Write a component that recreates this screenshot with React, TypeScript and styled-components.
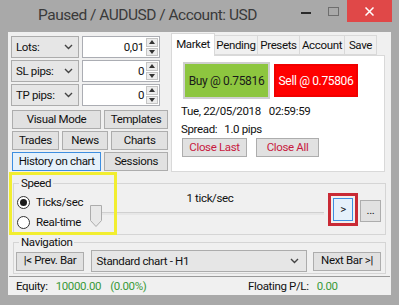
import React from 'react';
import styled, { createGlobalStyle } from 'styled-components';

const GlobalStyle = createGlobalStyle`
  html, body {
    margin: 0;
    padding: 0;
    background: #a9a9a9;
  }
  body {
    font-family: Roboto, "Liberation Sans", Arial, sans-serif;
    font-size: 11.5px;
    letter-spacing: -0.35px;
    color: #111;
  }
  * {
    box-sizing: border-box;
  }
`;

const Window = styled.div`
  width: 399px;
  height: 305px;
  background: #a9a9a9;
  display: flex;
  flex-direction: column;
  overflow: hidden;
`;

const TitleBar = styled.div`
  height: 32px;
  flex-shrink: 0;
  display: flex;
  align-items: flex-start;
`;

const Title = styled.div`
  flex: 1;
  padding: 5px 0 0 38px;
  font-size: 15.5px;
  letter-spacing: -0.5px;
  line-height: 20px;
  color: #3a3a3a;
  white-space: nowrap;
`;

const Controls = styled.div`
  display: flex;
  height: 22px;
  margin-right: 7px;
`;

const CtrlButton = styled.div<{ $close?: boolean; $w: number }>`
  width: ${p => p.$w}px;
  height: 22px;
  display: flex;
  align-items: center;
  justify-content: center;
  background: ${p => (p.$close ? '#e04848' : 'transparent')};
`;

const Client = styled.div`
  flex: 1;
  margin: 0 8px 10px 8px;
  background: #f0f0f0;
  display: flex;
  flex-direction: column;
`;

const TopSection = styled.div`
  display: flex;
  gap: 3px;
  padding: 1px 0 0 3px;
`;

const LeftColumn = styled.div`
  width: 157px;
  margin-top: 3px;
  display: flex;
  flex-direction: column;
`;

const ParamRow = styled.div`
  display: flex;
  gap: 3px;
  height: 22px;
  margin-bottom: 2px;
`;

const Combo = styled.div<{ $w: number }>`
  width: ${p => p.$w}px;
  height: 100%;
  background: #e6e6e6;
  border: 1px solid #acacac;
  display: flex;
  align-items: center;
  justify-content: space-between;
  padding: 0 5px 0 4px;
`;

const NumberBox = styled.div`
  width: 78px;
  height: 100%;
  background: #fff;
  border: 1px solid #abadb3;
  display: flex;
  align-items: center;
`;

const NumberValue = styled.span`
  flex: 1;
  text-align: right;
  padding-right: 2px;
`;

const Spinner = styled.div`
  width: 12px;
  height: 18px;
  margin-right: 1px;
  display: flex;
  flex-direction: column;
  gap: 1px;
`;

const SpinHalf = styled.div`
  flex: 1;
  background: #ececec;
  border: 1px solid #c4c4c4;
  display: flex;
  align-items: center;
  justify-content: center;
`;

const ButtonRow = styled.div`
  display: flex;
  gap: 3px;
  padding-left: 1px;
  margin-top: 2px;
  &:first-of-type {
    margin-top: 3px;
  }
`;

const Button = styled.div<{ $w: number; $h?: number; $active?: boolean; $color?: string }>`
  width: ${p => p.$w}px;
  height: ${p => p.$h ?? 19}px;
  background: ${p => (p.$active ? '#e5f1fb' : '#e1e1e1')};
  border: 1px solid ${p => (p.$active ? '#3d8ee0' : '#adadad')};
  color: ${p => p.$color ?? '#111'};
  display: flex;
  align-items: center;
  justify-content: center;
  white-space: nowrap;
  line-height: 1;
`;

const TabControl = styled.div`
  width: 214px;
  display: flex;
  flex-direction: column;
`;

const TabStrip = styled.div`
  height: 22px;
  display: flex;
  align-items: flex-end;
`;

const Tab = styled.div<{ $w: number; $active?: boolean }>`
  width: ${p => p.$w}px;
  height: ${p => (p.$active ? 23 : 20)}px;
  margin-left: ${p => (p.$active ? 0 : -1)}px;
  margin-bottom: ${p => (p.$active ? -1 : 0)}px;
  background: ${p => (p.$active ? '#fff' : '#f0f0f0')};
  border: 1px solid #d9d9d9;
  border-bottom: ${p => (p.$active ? 'none' : '1px solid #d9d9d9')};
  display: flex;
  align-items: ${p => (p.$active ? 'flex-start' : 'center')};
  padding-top: ${p => (p.$active ? 3 : 0)}px;
  justify-content: center;
  white-space: nowrap;
  position: relative;
  z-index: ${p => (p.$active ? 1 : 0)};
`;

const TabPanel = styled.div`
  height: 117px;
  background: #fff;
  border: 1px solid #d9d9d9;
  padding: 6px 0 0 9px;
`;

const TradeRow = styled.div`
  display: flex;
  align-items: center;
  gap: 4px;
  margin-left: 2px;
`;

const TradeButton = styled.div<{ $bg: string; $fg: string; $w: number; $h: number; $frame: string }>`
  width: ${p => p.$w}px;
  height: ${p => p.$h}px;
  background: ${p => p.$bg};
  color: ${p => p.$fg};
  border: 2px solid ${p => p.$frame};
  display: flex;
  align-items: center;
  justify-content: center;
  font-size: 12px;
`;

const InfoLine = styled.div`
  height: 18px;
  line-height: 18px;
  white-space: nowrap;
  display: flex;
`;

const InfoGap = styled.span<{ $w: number }>`
  display: inline-block;
  width: ${p => p.$w}px;
`;

const CloseRow = styled.div`
  display: flex;
  gap: 9px;
  margin-left: 1px;
`;

const Group = styled.fieldset`
  margin: 0 5px;
  padding: 0;
  border: 1px solid #d5d5d5;
  min-width: 0;
`;

const Legend = styled.legend`
  margin-left: 5px;
  padding: 0 2px;
  height: 15px;
  line-height: 15px;
`;

const SpeedWrap = styled.div`
  position: relative;
  margin-top: 4px;
`;

const Highlight = styled.div`
  position: absolute;
  left: 1px;
  top: -4px;
  width: 108px;
  height: 63px;
  border: 3px solid #f2ee30;
  pointer-events: none;
`;

const SpeedBody = styled.div`
  display: flex;
  align-items: flex-start;
  padding: 0 4px 5px 3px;
`;

const RadioColumn = styled.div`
  width: 69px;
  padding-top: 4px;
  display: flex;
  flex-direction: column;
  gap: 6px;
`;

const RadioItem = styled.div`
  height: 14px;
  display: flex;
  align-items: center;
  gap: 6px;
  white-space: nowrap;
`;

const RadioCircle = styled.span<{ $checked?: boolean }>`
  width: 13px;
  height: 13px;
  border-radius: 50%;
  border: 1px solid #333;
  background: #fff;
  display: flex;
  align-items: center;
  justify-content: center;
  &::after {
    content: '';
    width: 7px;
    height: 7px;
    border-radius: 50%;
    background: ${p => (p.$checked ? '#1a1a1a' : 'transparent')};
  }
`;

const SliderArea = styled.div`
  flex: 1;
  display: flex;
  flex-direction: column;
`;

const SliderLabel = styled.div`
  height: 14px;
  line-height: 14px;
  text-align: center;
  padding-left: 8px;
`;

const Track = styled.div`
  position: relative;
  height: 22px;
`;

const Groove = styled.div`
  margin: 7px 2px 0 10px;
  height: 3px;
  background: #e7e7e7;
  border-top: 1px solid #d0d0d0;
`;

const Thumb = styled.svg`
  position: absolute;
  left: 4px;
  top: 0;
`;

const RedFrame = styled.div`
  margin: 2px 0 0 2px;
  border: 3px solid #c92a35;
  padding: 2px 2px;
`;

const NavBody = styled.div`
  display: flex;
  align-items: center;
  justify-content: space-between;
  height: 22px;
  margin: 0 4px 1px 2px;
`;

const NavCombo = styled(Combo)`
  height: 22px;
  padding-left: 5px;
  padding-right: 7px;
`;

const StatusBar = styled.div`
  margin: 2px 1px 0;
  flex: 1;
  border-top: 1px solid #9a9a9a;
  display: flex;
  align-items: center;
  padding-left: 7px;
`;

const StatusPanel = styled.div<{ $w?: number }>`
  display: flex;
  align-items: center;
  width: ${p => (p.$w ? `${p.$w}px` : 'auto')};
`;

const StatusText = styled.span<{ $green?: boolean; $ml?: number }>`
  color: ${p => (p.$green ? '#3a9a3a' : '#111')};
  margin-left: ${p => p.$ml ?? 0}px;
  white-space: nowrap;
`;

const Chevron = () => (
  <svg width="9" height="6" viewBox="0 0 9 6">
    <path d="M1 1 L4.5 4.5 L8 1" fill="none" stroke="#444" strokeWidth="1.4" />
  </svg>
);

const Arrow = ({ up }: { up?: boolean }) => (
  <svg width="6" height="4" viewBox="0 0 6 4">
    <path d={up ? 'M0 4 L3 0 L6 4 Z' : 'M0 0 L3 4 L6 0 Z'} fill="#333" />
  </svg>
);

const params = [
  { label: 'Lots:', value: '0,01' },
  { label: 'SL pips:', value: '0' },
  { label: 'TP pips:', value: '0' },
];

const App: React.FC = () => {
  return (
    <>
      <GlobalStyle />
      <Window>
        <TitleBar>
          <Title>Paused / AUDUSD / Account: USD</Title>
          <Controls>
            <CtrlButton $w={28}>
              <svg width="10" height="2" viewBox="0 0 10 2" style={{ marginTop: 4 }}>
                <rect width="10" height="2" fill="#2a2a2a" />
              </svg>
            </CtrlButton>
            <CtrlButton $w={27}>
              <svg width="11" height="9" viewBox="0 0 11 9">
                <rect x="0.5" y="0.5" width="10" height="8" fill="none" stroke="#6e6e6e" />
              </svg>
            </CtrlButton>
            <CtrlButton $w={45} $close>
              <svg width="9" height="9" viewBox="0 0 9 9">
                <path d="M0.5 0.5 L8.5 8.5 M8.5 0.5 L0.5 8.5" stroke="#fff" strokeWidth="1.5" />
              </svg>
            </CtrlButton>
          </Controls>
        </TitleBar>

        <Client>
          <TopSection>
            <LeftColumn>
              {params.map(p => (
                <ParamRow key={p.label}>
                  <Combo $w={68}>
                    <span>{p.label}</span>
                    <Chevron />
                  </Combo>
                  <NumberBox>
                    <NumberValue>{p.value}</NumberValue>
                    <Spinner>
                      <SpinHalf><Arrow up /></SpinHalf>
                      <SpinHalf><Arrow /></SpinHalf>
                    </Spinner>
                  </NumberBox>
                </ParamRow>
              ))}
              <ButtonRow>
                <Button $w={89}>Visual Mode</Button>
                <Button $w={64}>Templates</Button>
              </ButtonRow>
              <ButtonRow>
                <Button $w={47}>Trades</Button>
                <Button $w={47}>News</Button>
                <Button $w={57}>Charts</Button>
              </ButtonRow>
              <ButtonRow>
                <Button $w={90} $active>History on chart</Button>
                <Button $w={64}>Sessions</Button>
              </ButtonRow>
            </LeftColumn>

            <TabControl>
              <TabStrip>
                <Tab $w={44} $active>Market</Tab>
                <Tab $w={44}>Pending</Tab>
                <Tab $w={43}>Presets</Tab>
                <Tab $w={46}>Account</Tab>
                <Tab $w={33}>Save</Tab>
              </TabStrip>
              <TabPanel>
                <TradeRow>
                  <TradeButton $w={87} $h={37} $bg="#8dc63f" $fg="#1a1a1a" $frame="#cfcfcf">
                    Buy @ 0.75816
                  </TradeButton>
                  <TradeButton $w={84} $h={33} $bg="#ff0000" $fg="#ffffff" $frame="#f00000">
                    Sell @ 0.75806
                  </TradeButton>
                </TradeRow>
                <InfoLine style={{ marginTop: 3 }}>
                  <span>Tue, 22/05/2018</span>
                  <InfoGap $w={8} />
                  <span>02:59:59</span>
                </InfoLine>
                <InfoLine>
                  <span>Spread:</span>
                  <InfoGap $w={7} />
                  <span>1.0 pips</span>
                </InfoLine>
                <CloseRow>
                  <Button $w={65} $color="#c8193f">Close Last</Button>
                  <Button $w={63} $color="#c8193f">Close All</Button>
                </CloseRow>
              </TabPanel>
            </TabControl>
          </TopSection>

          <SpeedWrap>
            <Group>
              <Legend>Speed</Legend>
              <SpeedBody>
                <RadioColumn>
                  <RadioItem>
                    <RadioCircle $checked />
                    Ticks/sec
                  </RadioItem>
                  <RadioItem>
                    <RadioCircle />
                    Real-time
                  </RadioItem>
                </RadioColumn>
                <SliderArea>
                  <SliderLabel>1 tick/sec</SliderLabel>
                  <Track>
                    <Groove />
                    <Thumb width="12" height="22" viewBox="0 0 12 22">
                      <path d="M0.5 0.5 H11.5 V15.5 L6 21.5 L0.5 15.5 Z" fill="#e8e8e8" stroke="#acacac" />
                    </Thumb>
                  </Track>
                </SliderArea>
                <RedFrame>
                  <Button $w={20} $h={23} $active>&gt;</Button>
                </RedFrame>
                <Button $w={21} $h={22} style={{ marginTop: 9, marginLeft: 2 }}>...</Button>
              </SpeedBody>
            </Group>
            <Highlight />
          </SpeedWrap>

          <Group>
            <Legend>Navigation</Legend>
            <NavBody>
              <Button $w={68}>|&lt; Prev. Bar</Button>
              <NavCombo $w={216}>
                <span>Standard chart - H1</span>
                <Chevron />
              </NavCombo>
              <Button $w={68}>Next Bar &gt;|</Button>
            </NavBody>
          </Group>

          <StatusBar>
            <StatusPanel $w={232}>
              <StatusText>Equity:</StatusText>
              <StatusText $green $ml={8}>10000.00</StatusText>
              <StatusText $green $ml={9}>(0.00%)</StatusText>
            </StatusPanel>
            <StatusPanel>
              <StatusText>Floating P/L:</StatusText>
              <StatusText $green $ml={8}>0.00</StatusText>
            </StatusPanel>
          </StatusBar>
        </Client>
      </Window>
    </>
  );
};

export default App;
